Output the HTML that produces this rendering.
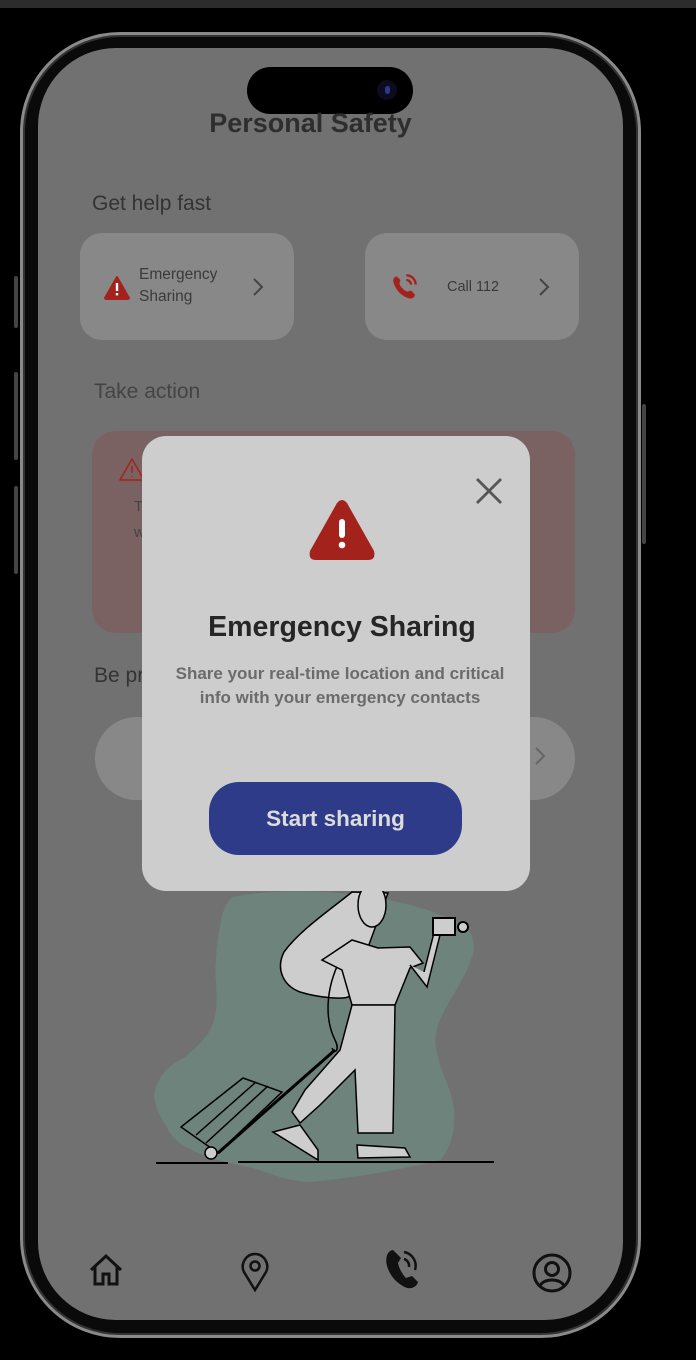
<!DOCTYPE html>
<html><head><meta charset="utf-8"><style>
*{margin:0;padding:0;box-sizing:border-box}
body{width:696px;height:1360px;background:#000;position:relative;overflow:hidden;font-family:"Liberation Sans",sans-serif}
.abs{position:absolute}
.topbar{left:0;top:0;width:696px;height:8px;background:#2c2c2c}
.frame{left:20px;top:32px;width:621px;height:1306px;border-radius:100px;border:3px solid #8a8a8a;background:#0a0a0a;box-shadow:inset 0 0 0 2px #333}
.screen{left:38px;top:48px;width:585px;height:1272px;border-radius:78px;background:#717171;overflow:hidden}
.t{color:#333}
.card{background:#888;border-radius:22px}
</style></head><body>
<div class="abs topbar"></div>
<div class="abs" style="left:14px;top:276px;width:4px;height:52px;background:#444;border-radius:2px"></div>
<div class="abs" style="left:14px;top:372px;width:4px;height:88px;background:#444;border-radius:2px"></div>
<div class="abs" style="left:14px;top:486px;width:4px;height:88px;background:#444;border-radius:2px"></div>
<div class="abs" style="left:642px;top:404px;width:4px;height:140px;background:#444;border-radius:2px"></div>
<div class="abs frame"></div>
<div class="abs screen">
  <div class="abs" style="left:209px;top:19px;width:166px;height:47px;border-radius:24px;background:#000"></div>
  <div class="abs" style="left:339px;top:32px;width:20px;height:20px;border-radius:50%;background:#0c0c1c"><div style="margin:6px auto;width:5px;height:8px;border-radius:3px;background:#2a3a8a"></div></div>
  <div class="abs t" style="left:0;width:545px;top:60px;text-align:center;font-size:27px;font-weight:bold;color:#2e2e2e">Personal Safety</div>
  <div class="abs t" style="left:54px;top:144px;font-size:21px">Get help fast</div>
  <div class="abs card" style="left:42px;top:185px;width:214px;height:107px">
    <svg class="abs" style="left:24px;top:43px" width="26" height="24" viewBox="0 0 26 24"><path d="M13 1 L25 22 Q25 23 23 23 H3 Q1 23 1 22 Z" fill="#a3231c" stroke="#a3231c" stroke-linejoin="round" stroke-width="2"/><rect x="11.8" y="7" width="2.4" height="8" fill="#fff"/><rect x="11.8" y="17" width="2.4" height="2.4" fill="#fff"/></svg>
    <div class="abs" style="left:59px;top:31px;font-size:15.5px;line-height:22px;color:#3a3a3a">Emergency<br>Sharing</div>
    <svg class="abs" style="left:172px;top:44px" width="12" height="20"><path d="M2 2 L10 10 L2 18" fill="none" stroke="#444" stroke-width="2"/></svg>
  </div>
  <div class="abs card" style="left:327px;top:185px;width:214px;height:107px">
    <svg class="abs" style="left:25px;top:40px" width="28" height="28" viewBox="0 0 24 24"><path d="M6 3 C4 3 2 5 3 8 C5 15 10 20 17 22 C20 22 22 20 21 18 L18 15 L15 16 C12 15 9 12 8 9 L9 6 Z" fill="#a3231c"/><path d="M14 2 A8 8 0 0 1 22 10 M14 6 A4 4 0 0 1 18 10" fill="none" stroke="#a3231c" stroke-width="2"/></svg>
    <div class="abs" style="left:82px;top:46px;font-size:14.5px;color:#3a3a3a">Call 112</div>
    <svg class="abs" style="left:173px;top:44px" width="12" height="20"><path d="M2 2 L10 10 L2 18" fill="none" stroke="#444" stroke-width="2"/></svg>
  </div>
  <div class="abs" style="left:56px;top:332px;font-size:21px;color:#444">Take action</div>
  <div class="abs" style="left:54px;top:383px;width:483px;height:202px;border-radius:24px;background:#7a6262"></div>
  <svg class="abs" style="left:80px;top:409px" width="28" height="26" viewBox="0 0 28 26"><path d="M14 2 L26 23 H2 Z" fill="none" stroke="#a3231c" stroke-width="1.5" stroke-linejoin="round"/><path d="M14 9v7M14 19v1" stroke="#a3231c" stroke-width="1.5"/></svg>
  <div class="abs" style="left:96px;top:450px;font-size:15px;color:#444">T</div>
  <div class="abs" style="left:96px;top:476px;font-size:15px;color:#444">w</div>
  <div class="abs" style="left:56px;top:616px;font-size:21px;color:#333">Be pr</div>
  <div class="abs" style="left:57px;top:669px;width:480px;height:83px;border-radius:42px;background:#888"></div>
  <svg class="abs" style="left:496px;top:698px" width="12" height="20"><path d="M2 2 L10 10 L2 18" fill="none" stroke="#666" stroke-width="2"/></svg>
  <!-- illustration, page coordinates -->
  <svg class="abs" style="left:-38px;top:-48px" width="696" height="1360" viewBox="0 0 696 1360">
    <path d="M233 897 C290 885 400 890 467 927 C476 940 475 950 471 960 C460 990 440 1010 436 1033 C432 1060 452 1085 454 1110 C456 1135 448 1150 441 1160 C400 1170 340 1180 308 1182 C280 1180 265 1170 247 1167 C215 1160 175 1150 167 1127 C155 1110 152 1095 156 1087 C162 1070 175 1062 185 1057 C205 1040 214 1030 216 1010 C218 990 214 975 216 960 C217 945 218 935 220 927 C222 912 226 902 233 897 Z" fill="#6d837c"/>
    <path d="M352 892 C330 910 300 930 284 952 C276 968 282 985 300 992 C320 998 345 1000 350 996 L388 893 Z" fill="#cdcdcd" stroke="#000" stroke-width="1.5"/>
    <path d="M340 960 C325 990 325 1020 335 1040 C340 1050 335 1055 332 1048" fill="none" stroke="#000" stroke-width="1.5"/>
    <ellipse cx="372" cy="905" rx="14" ry="22" fill="#cdcdcd" stroke="#000" stroke-width="1.5"/>
    <path d="M322 960 L352 940 L378 948 L410 947 L423 963 L410 968 L395 1005 L352 1005 L342 970 Z" fill="#cdcdcd" stroke="#000" stroke-width="1.5"/>
    <path d="M410 965 L427 987 L442 927 L436 925 L424 972" fill="#cdcdcd" stroke="#000" stroke-width="1.5"/>
    <rect x="433" y="918" width="22" height="17" fill="#cdcdcd" stroke="#000" stroke-width="2"/>
    <circle cx="463" cy="927" r="5" fill="#cdcdcd" stroke="#000" stroke-width="2"/>
    <path d="M352 1005 L395 1005 L393 1133 L358 1133 L355 1070 L320 1105 L300 1123 L292 1112 L305 1090 L340 1050 Z" fill="#cdcdcd" stroke="#000" stroke-width="1.5"/>
    <path d="M357 1145 L405 1148 L410 1157 L358 1158 Z M273 1132 L300 1125 L318 1150 L318 1160 Z" fill="#cdcdcd" stroke="#000" stroke-width="1.5"/>
    <path d="M181 1127 L243 1078 L282 1092 L218 1153 Z" fill="none" stroke="#000" stroke-width="1.5"/>
    <path d="M196 1135 L256 1082 M206 1143 L268 1086" stroke="#000" stroke-width="1.5"/>
    <path d="M335 1050 L218 1153" stroke="#000" stroke-width="3"/>
    <circle cx="211" cy="1153" r="6" fill="#cdcdcd" stroke="#000" stroke-width="1.5"/>
    <path d="M156 1163 H228 M238 1162 H494" stroke="#000" stroke-width="2"/>
  </svg>
  <!-- bottom nav -->
  <svg class="abs" style="left:49px;top:1204px" width="38" height="36" viewBox="0 0 38 36"><path d="M4 18 L19 4 L34 18 M8 15 V32 H16 V22 H22 V32 H30 V15" fill="none" stroke="#111" stroke-width="3" stroke-linejoin="miter"/></svg>
  <svg class="abs" style="left:202px;top:1204px" width="30" height="40" viewBox="0 0 30 40"><path d="M15 38 L4 20 C0 12 6 2 15 2 C24 2 30 12 26 20 Z" fill="none" stroke="#111" stroke-width="2.5"/><circle cx="15" cy="14" r="4.5" fill="none" stroke="#111" stroke-width="2.5"/></svg>
  <svg class="abs" style="left:347px;top:1200px" width="36" height="42" viewBox="0 0 36 42"><path d="M8 2 C2 3 0 10 2 18 C5 28 12 36 22 40 C28 41 32 38 33 34 L27 28 L21 30 C17 26 14 20 13 15 L16 10 Z" fill="#111"/><path d="M19 4 A14 14 0 0 1 30 22 M19 11 A7 7 0 0 1 24 19" fill="none" stroke="#111" stroke-width="2.5"/></svg>
  <svg class="abs" style="left:493px;top:1204px" width="42" height="42" viewBox="0 0 42 42"><circle cx="21" cy="21" r="18" fill="none" stroke="#111" stroke-width="3"/><circle cx="21" cy="17" r="6.5" fill="none" stroke="#111" stroke-width="3"/><path d="M9 34 C12 26 30 26 33 34" fill="none" stroke="#111" stroke-width="3"/></svg>
  <!-- modal -->
  <div class="abs" style="left:104px;top:388px;width:388px;height:455px;border-radius:24px;background:#cdcdcd">
    <svg class="abs" style="left:332px;top:40px" width="30" height="30"><path d="M3 3 L27 27 M27 3 L3 27" stroke="#555" stroke-width="2.8"/></svg>
    <svg class="abs" style="left:166px;top:63px" width="68" height="62" viewBox="0 0 68 62"><path d="M29 4 Q34 -2 39 4 L66 52 Q68 61 60 61 H8 Q0 61 2 52 Z" fill="#a3231c"/><rect x="31" y="20" width="6" height="19" rx="3" fill="#fff"/><circle cx="34" cy="46" r="3.3" fill="#fff"/></svg>
    <div class="abs" style="left:0;width:400px;top:175px;text-align:center;font-size:28.5px;font-weight:bold;color:#262626">Emergency Sharing</div>
    <div class="abs" style="left:-10px;width:416px;top:226px;text-align:center;font-size:17px;line-height:24px;font-weight:bold;color:#6b6b6b">Share your real-time location and critical<br>info with your emergency contacts</div>
    <div class="abs" style="left:67px;top:346px;width:253px;height:73px;border-radius:30px;background:#2e3b88;color:#dcdcdc;font-size:22.5px;font-weight:bold;text-align:center;line-height:73px">Start sharing</div>
  </div>
</div>
</body></html>
